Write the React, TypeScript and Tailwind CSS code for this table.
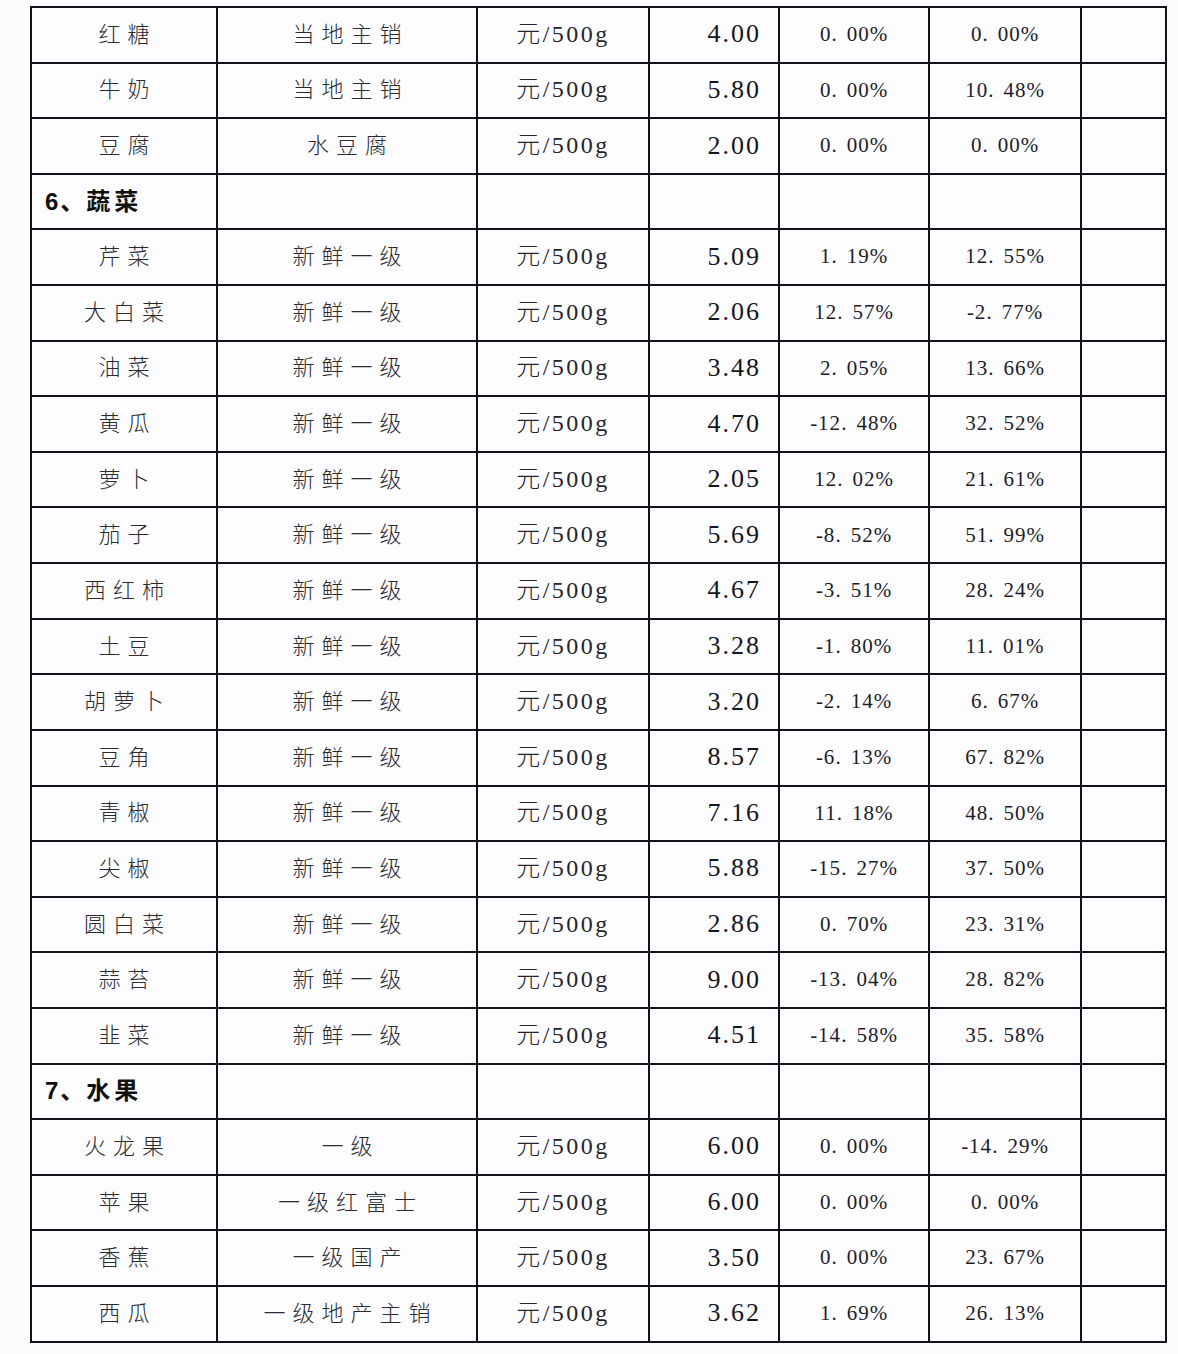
import React from "react";

type Row =
  | { kind: "cat"; label: string }
  | { kind: "item"; name: string; spec: string; price: string; a: string; b: string };

const rows: Row[] = [
  { kind: "item", name: "红糖", spec: "当地主销", price: "4.00", a: "0.00%", b: "0.00%" },
  { kind: "item", name: "牛奶", spec: "当地主销", price: "5.80", a: "0.00%", b: "10.48%" },
  { kind: "item", name: "豆腐", spec: "水豆腐", price: "2.00", a: "0.00%", b: "0.00%" },
  { kind: "cat", label: "6、蔬菜" },
  { kind: "item", name: "芹菜", spec: "新鲜一级", price: "5.09", a: "1.19%", b: "12.55%" },
  { kind: "item", name: "大白菜", spec: "新鲜一级", price: "2.06", a: "12.57%", b: "-2.77%" },
  { kind: "item", name: "油菜", spec: "新鲜一级", price: "3.48", a: "2.05%", b: "13.66%" },
  { kind: "item", name: "黄瓜", spec: "新鲜一级", price: "4.70", a: "-12.48%", b: "32.52%" },
  { kind: "item", name: "萝卜", spec: "新鲜一级", price: "2.05", a: "12.02%", b: "21.61%" },
  { kind: "item", name: "茄子", spec: "新鲜一级", price: "5.69", a: "-8.52%", b: "51.99%" },
  { kind: "item", name: "西红柿", spec: "新鲜一级", price: "4.67", a: "-3.51%", b: "28.24%" },
  { kind: "item", name: "土豆", spec: "新鲜一级", price: "3.28", a: "-1.80%", b: "11.01%" },
  { kind: "item", name: "胡萝卜", spec: "新鲜一级", price: "3.20", a: "-2.14%", b: "6.67%" },
  { kind: "item", name: "豆角", spec: "新鲜一级", price: "8.57", a: "-6.13%", b: "67.82%" },
  { kind: "item", name: "青椒", spec: "新鲜一级", price: "7.16", a: "11.18%", b: "48.50%" },
  { kind: "item", name: "尖椒", spec: "新鲜一级", price: "5.88", a: "-15.27%", b: "37.50%" },
  { kind: "item", name: "圆白菜", spec: "新鲜一级", price: "2.86", a: "0.70%", b: "23.31%" },
  { kind: "item", name: "蒜苔", spec: "新鲜一级", price: "9.00", a: "-13.04%", b: "28.82%" },
  { kind: "item", name: "韭菜", spec: "新鲜一级", price: "4.51", a: "-14.58%", b: "35.58%" },
  { kind: "cat", label: "7、水果" },
  { kind: "item", name: "火龙果", spec: "一级", price: "6.00", a: "0.00%", b: "-14.29%" },
  { kind: "item", name: "苹果", spec: "一级红富士", price: "6.00", a: "0.00%", b: "0.00%" },
  { kind: "item", name: "香蕉", spec: "一级国产", price: "3.50", a: "0.00%", b: "23.67%" },
  { kind: "item", name: "西瓜", spec: "一级地产主销", price: "3.62", a: "1.69%", b: "26.13%" },
];

function Pct({ v }: { v: string }) {
  const i = v.indexOf(".");
  return (
    <span className="font-['Liberation_Serif',serif] text-[21px] tracking-[1px] text-[#1c1c28]">
      {v.slice(0, i)}
      <span className="mr-[9px]">.</span>
      {v.slice(i + 1)}
    </span>
  );
}

const cell = "bg-[#fdfdff] flex items-center h-[53.62px]";
const zh =
  "font-['Noto_Sans_CJK_SC',sans-serif] text-[22px] font-light tracking-[7px] -mr-[7px] mb-[5px] text-[#2a2a30]";

export default function App() {
  return (
    <div className="min-h-[1354px] w-[1178px] bg-[#fcfcfe] pt-[6px] pl-[30px]">
      <div className="grid w-[1137px] grid-cols-[184px_258px_170px_128px_148px_150px_83px] gap-[2px] bg-[#121218] p-[2px]">
        {rows.map((r, idx) =>
          r.kind === "cat" ? (
            <React.Fragment key={idx}>
              <div className={`${cell} pl-[13px]`}>
                <span className="mb-[2px] text-[24px] font-bold tracking-[2px] text-[#111]">
                  <span className="font-['Liberation_Sans',sans-serif]">{r.label.slice(0, 1)}</span>
                  <span className="font-['Noto_Sans_CJK_SC',sans-serif]">{r.label.slice(1, 2)}</span>
                  <span className="font-['Noto_Sans_CJK_SC',sans-serif] tracking-[4px]">{r.label.slice(2)}</span>
                </span>
              </div>
              <div className={cell} />
              <div className={cell} />
              <div className={cell} />
              <div className={cell} />
              <div className={cell} />
              <div className={cell} />
            </React.Fragment>
          ) : (
            <React.Fragment key={idx}>
              <div className={`${cell} justify-center`}>
                <span className={zh}>{r.name}</span>
              </div>
              <div className={`${cell} justify-center`}>
                <span className={zh}>{r.spec}</span>
              </div>
              <div className={`${cell} justify-center`}>
                <span className="mb-[4px] text-[24px] tracking-[2.5px] text-[#24242c]">
                  <span className="font-['Noto_Sans_CJK_SC',sans-serif] font-light">元</span>
                  <span className="font-['Liberation_Serif',serif]">/500g</span>
                </span>
              </div>
              <div className={`${cell} justify-end pr-[17px]`}>
                <span className="mb-[2px] font-['Liberation_Serif',serif] text-[26px] tracking-[2px] text-[#15151c]">
                  {r.price}
                </span>
              </div>
              <div className={`${cell} justify-center`}>
                <Pct v={r.a} />
              </div>
              <div className={`${cell} justify-center`}>
                <Pct v={r.b} />
              </div>
              <div className={cell} />
            </React.Fragment>
          )
        )}
      </div>
    </div>
  );
}
